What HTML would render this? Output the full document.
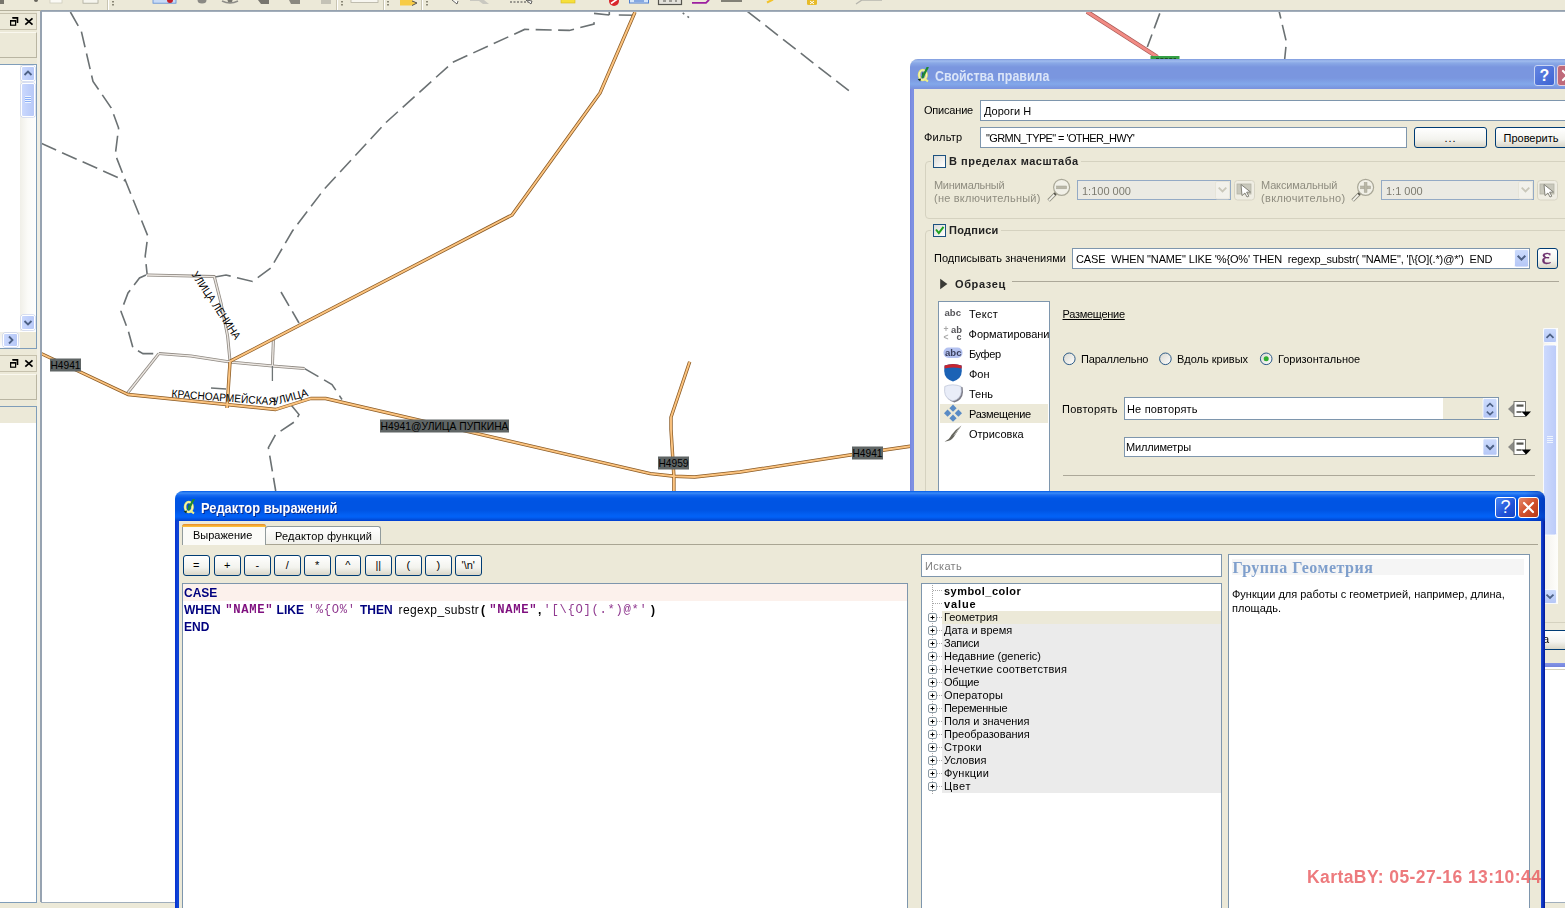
<!DOCTYPE html>
<html><head><meta charset="utf-8">
<style>
*{box-sizing:border-box;margin:0;padding:0}
html,body{width:1565px;height:908px;overflow:hidden;background:#fff}
body{font-family:"Liberation Sans",sans-serif;font-size:11px;color:#000;position:relative}
.a{position:absolute}
.t{will-change:opacity;opacity:.999;position:absolute;white-space:nowrap;line-height:13px}
.b{font-weight:bold}
.inp{position:absolute;background:#fff;border:1px solid #7e96ad}
.btn{opacity:.999;position:absolute;border:1px solid #003c74;border-radius:3px;background:linear-gradient(#fff,#f3f3ee 60%,#d9d6c8);text-align:center;line-height:18px}
/* MAIN WINDOW */
#tb{left:0;top:0;width:1565px;height:10px;background:#ece9d8}
#tbl{left:41px;top:10px;width:1524px;height:2px;background:linear-gradient(#8f9ba9,#aab5c1)}
#tbl2{left:0;top:10px;width:41px;height:1px;background:#b3af9b}
#lp{left:0;top:11px;width:37px;height:890px;background:#ece9d8}
#lpg{left:37px;top:11px;width:4px;height:896px;background:#f1efe4}
#lpb{left:40.4px;top:11px;width:1.4px;height:891px;background:#97a3b1}
#bot{left:0;top:902px;width:1565px;height:6px;background:#ece9d8}
.m{font-family:"Liberation Mono",monospace;font-size:12.2px;letter-spacing:.68px;line-height:15px;padding-left:.3px}
.s{color:#903a90}
.b.s{color:#7f107f}
.k{font-size:12px;color:#00007f}
.sb{border:1px solid #fff;border-radius:2px;background:linear-gradient(90deg,#cbd9fd,#c0d0fb 50%,#b8c9f7);box-shadow:0 0 0 .5px #b7c6ee}
</style></head><body>
<!-- toolbar -->
<div class="a" id="tb"></div><div class="a" id="tbl"></div><div class="a" id="tbl2"></div>
<!--TB-->
<svg class="a" style="left:0;top:0" width="1565" height="10" viewBox="0 0 1565 10">
<g stroke="#c9c5b2" stroke-width="1"><path d="M107.5,0V10M336.5,0V10M383.5,0V10M421.5,0V10"/></g>
<g stroke="#fff" stroke-width="1"><path d="M108.5,0V10M337.5,0V10M384.5,0V10M422.5,0V10"/></g>
<g fill="#8a8776"><rect x="112" y="1" width="2" height="1.5"/><rect x="112" y="4" width="2" height="1.5"/><rect x="341" y="1" width="2" height="1.5"/><rect x="341" y="4" width="2" height="1.5"/><rect x="387" y="1" width="2" height="1.5"/><rect x="387" y="4" width="2" height="1.5"/><rect x="426" y="1" width="2" height="1.5"/><rect x="426" y="4" width="2" height="1.5"/></g>
<path d="M0,0h4v4h-4z" fill="#77756c"/><circle cx="36" cy="0" r="2" fill="#66645c"/>
<rect x="50" y="-1" width="12" height="4" fill="#fbfaf5" stroke="#cfccbd" stroke-width=".8"/>
<rect x="83" y="-1" width="15" height="4.2" fill="#f6f5ee" stroke="#aaa89a" stroke-width=".8"/>
<rect x="153" y="-1" width="23" height="4.2" fill="#c9dbf6" stroke="#5d8bd8" stroke-width=".8"/><circle cx="170" cy="0" r="3" fill="#c41f2a"/>
<ellipse cx="202" cy="0" rx="4.5" ry="3.5" fill="#8a8984"/>
<path d="M222,1 Q230,5 238,1" fill="none" stroke="#8e8d88" stroke-width="1.6"/><circle cx="230" cy="0" r="2.5" fill="#77766f"/>
<path d="M258,0h11v4h-8z" fill="#77756e"/><path d="M289,0h11v4h-9z" fill="#8a8880"/><path d="M321,0h10v4h-10z" fill="#c4c2b6"/>
<rect x="351" y="-1" width="27" height="3.5" fill="#f7f6f0" stroke="#b4b1a2" stroke-width=".8"/>
<path d="M400,0h12l5,3l-5,2.5h-12z" fill="#f7cb46"/><path d="M412,1l5,2l-5,2.5" stroke="#555" fill="none" stroke-width="1"/>
<path d="M452,0l5,4l1,-3" fill="#fff" stroke="#555" stroke-width=".9"/>
<path d="M470,0h14l5,4h-6l-4,-3h-9z" fill="#c9c8c0"/>
<path d="M510,2h20" stroke="#444" stroke-width="1" stroke-dasharray="2 1.5"/><path d="M526,0l5,4l1,-3z" fill="#fff" stroke="#444" stroke-width=".8"/>
<rect x="561" y="-1" width="14" height="4" fill="#f6df3a" stroke="#d8b820" stroke-width=".6"/>
<circle cx="614" cy="1" r="5" fill="#d9262c"/><path d="M611,3.5L617.5,-1" stroke="#fff" stroke-width="1.6"/>
<rect x="629.5" y="-1" width="19" height="4" fill="#d6e6fa" stroke="#4f7fd0" stroke-width="1"/><path d="M634,1h10" stroke="#4f7fd0" stroke-width="1.2"/>
<rect x="658.5" y="-1" width="23" height="5.5" fill="#e4e3dc" stroke="#55554e" stroke-width="1.2"/><path d="M663,1h14" stroke="#55554e" stroke-width="1.2" stroke-dasharray="3 3"/>
<path d="M692,2.8h14l3,-3" fill="none" stroke="#9c1fa0" stroke-width="1.8"/>
<path d="M721,1h21" stroke="#55554e" stroke-width="1.4"/>
<path d="M767,2.5l6,-3" stroke="#f3c32a" stroke-width="2"/>
<rect x="807" y="-1" width="10" height="6" rx="1.5" fill="#e7bb28"/><path d="M810,1l4,3M814,1l-4,3" stroke="#fff" stroke-width="1"/>
<path d="M856,4l6,-4h20" fill="none" stroke="#b7b6ae" stroke-width="1.4"/>
</svg>
<!--/TB-->
<!-- left panel -->
<div class="a" id="lp"></div><div class="a" id="lpg"></div><div class="a" id="lpb"></div>
<div class="a" id="bot"></div><div class="a" id="botl" style="left:41px;top:902px;width:1530px;height:1px;background:#a0aebc"></div>
<!--LEFT-->
<div id="lpanel">
 <!-- dock title 1 -->
 <div class="a" style="left:-2px;top:13px;width:39px;height:17px;border:1px solid #c6c1ad"></div>
 <svg class="a" style="left:9px;top:16px" width="26" height="11" viewBox="9 16 26 11"><path d="M12.5,17.7 h5 v5.3" fill="none" stroke="#000" stroke-width="1.6"/><rect x="12.5" y="17" width="5" height="1.6" fill="#000"/><rect x="10.6" y="20.6" width="5" height="4.6" fill="#ece9d8" stroke="#000" stroke-width="1.2"/><rect x="10" y="20" width="6.2" height="1.6" fill="#000"/><path d="M25.3,18.3 L32.5,24.6 M32.5,18.3 L25.3,24.6" stroke="#000" stroke-width="1.7"/></svg>
 <div class="a" style="left:-2px;top:32px;width:39px;height:26px;border:1px solid #b9b5a2;border-top-color:#faf8ef"></div>
 <!-- list 1 -->
 <div class="a" style="left:-2px;top:64px;width:39px;height:285px;border:1px solid #7f9db9;background:#fff"></div>
 <div class="a" style="left:20px;top:65px;width:16px;height:266px;background:linear-gradient(90deg,#f0efe8,#fbfbf8 50%,#fefefd)"></div>
 <div class="a" style="left:-1px;top:332px;width:37px;height:16px;background:#ece9d8"></div>
 <div class="a" style="left:-1px;top:332px;width:21px;height:16px;background:linear-gradient(#f0efe8,#fefefd)"></div>
 <!-- up btn -->
 <div class="a sb" style="left:21px;top:66px;width:14px;height:15px"></div>
 <svg class="a" style="left:21px;top:66px" width="14" height="15"><path d="M3.5,9 L7,5.5 L10.5,9" fill="none" stroke="#4d6185" stroke-width="1.8"/></svg>
 <!-- thumb -->
 <div class="a sb" style="left:21px;top:83px;width:14px;height:34px"></div>
 <div class="a" style="left:25px;top:96px;width:6px;height:7px;background:repeating-linear-gradient(#eef4fe 0,#eef4fe 1px,#8cb0f8 1px,#8cb0f8 2px)"></div>
 <!-- down btn -->
 <div class="a sb" style="left:21px;top:315px;width:14px;height:15px"></div>
 <svg class="a" style="left:21px;top:315px" width="14" height="15"><path d="M3.5,6 L7,9.5 L10.5,6" fill="none" stroke="#4d6185" stroke-width="1.8"/></svg>
 <!-- right btn -->
 <div class="a sb" style="left:3px;top:333px;width:15px;height:14px"></div>
 <svg class="a" style="left:3px;top:333px" width="15" height="14"><path d="M6,3.5 L9.5,7 L6,10.5" fill="none" stroke="#4d6185" stroke-width="1.8"/></svg>
 <!-- dock title 2 -->
 <div class="a" style="left:-2px;top:355px;width:39px;height:17px;border:1px solid #c6c1ad"></div>
 <svg class="a" style="left:9px;top:358px" width="26" height="11" viewBox="9 16 26 11"><path d="M12.5,17.7 h5 v5.3" fill="none" stroke="#000" stroke-width="1.6"/><rect x="12.5" y="17" width="5" height="1.6" fill="#000"/><rect x="10.6" y="20.6" width="5" height="4.6" fill="#ece9d8" stroke="#000" stroke-width="1.2"/><rect x="10" y="20" width="6.2" height="1.6" fill="#000"/><path d="M25.3,18.3 L32.5,24.6 M32.5,18.3 L25.3,24.6" stroke="#000" stroke-width="1.7"/></svg>
 <div class="a" style="left:-2px;top:374px;width:39px;height:26px;border:1px solid #b9b5a2;border-top-color:#faf8ef"></div>
 <!-- list 2 -->
 <div class="a" style="left:-2px;top:406px;width:39px;height:497px;border:1px solid #7f9db9;background:#fff"></div>
 <div class="a" style="left:-1px;top:407px;width:37px;height:16px;background:#ece9d8"></div>
</div>
<!--/LEFT-->
<!--MAP-->
<svg class="a" style="left:42px;top:12px" width="1523" height="890" viewBox="42 12 1523 890">
<defs>
<path id="pLen" d="M191.2,274.6 L234.8,340"/>
<path id="pKr" d="M171.3,397.2 L275.7,405.4"/>
<path id="pUl" d="M273.5,405.4 L309.3,395.8"/>
</defs>
<g fill="none" stroke="#6b7173" stroke-width="1.6" stroke-dasharray="16 6.5">
<path d="M70.4,12 L81.4,31.6 L93,81.4 L111.3,108 L118.6,128 L115.3,154.5 L125.6,181 L147.8,236 L145.2,256 L147.2,275"/>
<path d="M41.5,143.5 L125.6,181"/>
<path d="M146,275 L139.5,278 L128,293 L121,311.5 L128,330 L133,348 L143,353.6 L159,353.6"/>
<path d="M215,277 L226,275 L252.5,281.5 L270.8,268 L292.4,231 L324,189.4 L385.4,123 L452.7,62.3 L524.6,29.4 L569.3,30.4 L594,24 L594.2,20"/>
<path d="M594,13.4 L609.3,15 M609.3,12 V15 M618.8,15 L634.8,15.3" stroke-dasharray="none"/>
<path d="M682.7,12.8 L689,17.6" stroke-dasharray="2 4"/>
<path d="M281,292 L299,323"/>
<path d="M304.6,368.6 L332,384.5 L342,399.5"/>
<path d="M290.7,404.5 L299,414.5 L295.7,421 L275.7,434.4 L268.4,447.7 L275.7,491"/>
<path d="M747.6,11.6 L853.9,94.7"/>
<path d="M1159.8,13.4 L1147.3,47"/>
<path d="M1279.2,11.7 L1286.4,42 L1284.6,60" stroke-dashoffset="9"/>
</g>
<!-- grey streets -->
<g fill="none" stroke-linejoin="round">
<g stroke="#8f8982" stroke-width="3">
<path d="M147,275 L214.3,276.6 L221,303 L227.6,336 L230,361"/>
<path d="M158.8,353.6 L191,356 L230,362 L272.4,366 L304.6,368.6"/>
<path d="M158.8,353.6 L127.2,393.5"/>
<path d="M273.4,339.7 L272.4,366"/>
</g>
<g stroke="#ebe6e1" stroke-width="1.4">
<path d="M147,275 L214.3,276.6 L221,303 L227.6,336 L230,361"/>
<path d="M158.8,353.6 L191,356 L230,362 L272.4,366 L304.6,368.6"/>
<path d="M158.8,353.6 L127.2,393.5"/>
<path d="M273.4,339.7 L272.4,366"/>
</g>
<path d="M272.4,366 L272.4,381" stroke="#6e7475" stroke-width="1.3"/>
<path d="M211,388 L226,389" stroke="#6e7475" stroke-width="1.3"/>
</g>
<!-- orange roads -->
<g fill="none" stroke-linejoin="round">
<g stroke="#8a5a24" stroke-width="3.4">
<path d="M41.5,353.7 L128,394.5 L275.7,409.5 L310.6,398.5 L325.6,398.5 L650.3,473.6 L674.4,476.3 L694.6,477 L740,472 L851.6,454.8 L912,446"/>
<path d="M230,361.3 L512,215 L600,93 L635,12"/>
<path d="M230,362 L227,408"/>
<path d="M689.7,361.7 L671,417.2 L671,429.3 L673.9,476.3 L673.9,491"/>
</g>
<g stroke="#fcc480" stroke-width="1.9">
<path d="M41.5,353.7 L128,394.5 L275.7,409.5 L310.6,398.5 L325.6,398.5 L650.3,473.6 L674.4,476.3 L694.6,477 L740,472 L851.6,454.8 L912,446"/>
<path d="M230,361.3 L512,215 L600,93 L635,12"/>
<path d="M230,362 L227,408"/>
<path d="M689.7,361.7 L671,417.2 L671,429.3 L673.9,476.3 L673.9,491"/>
</g>
</g>
<!-- red road -->
<path d="M1087,11.7 L1157.4,57" stroke="#a85a56" stroke-width="4.4" fill="none"/>
<path d="M1087,11.7 L1157.4,57" stroke="#f28b84" stroke-width="2.8" fill="none"/>
<rect x="1150.5" y="56" width="29" height="4.4" fill="#35a046"/><path d="M1156,58.6H1176" stroke="#1d4f25" stroke-width="1.4" stroke-dasharray="3 1.4"/>
<!-- labels -->
<g font-family="Liberation Sans, sans-serif" font-size="11" fill="#000" opacity=".999">
<rect x="50" y="358.5" width="31" height="13" fill="#5f6565"/><text x="50.5" y="369.3" textLength="30" lengthAdjust="spacingAndGlyphs">H4941</text>
<rect x="380" y="419.5" width="129" height="13" fill="#5f6565"/><text x="380.5" y="430.3" textLength="128" lengthAdjust="spacingAndGlyphs">H4941@УЛИЦА ПУПКИНА</text>
<rect x="658" y="456.5" width="31" height="13" fill="#5f6565"/><text x="658.5" y="467.3" textLength="30" lengthAdjust="spacingAndGlyphs">H4959</text>
<rect x="852" y="446.5" width="31" height="13" fill="#5f6565"/><text x="852.5" y="457.3" textLength="30" lengthAdjust="spacingAndGlyphs">H4941</text>
<text><textPath href="#pLen" textLength="79" lengthAdjust="spacingAndGlyphs">УЛИЦА ЛЕНИНА</textPath></text>
<text><textPath href="#pKr" textLength="104.5" lengthAdjust="spacingAndGlyphs">КРАСНОАРМЕЙСКАЯ</textPath></text>
<text><textPath href="#pUl" textLength="36.5" lengthAdjust="spacingAndGlyphs">УЛИЦА</textPath></text>
</g>
</svg>
<!--/MAP-->
<!--RULEDLG-->
<div id="rd">
 <!-- frame -->
 <div class="a" style="left:910px;top:59px;width:660px;height:608px;background:#ece9d8;border-radius:8px 0 0 0"></div>
 <div class="a" style="left:910px;top:59px;width:660px;height:30px;border-radius:8px 0 0 0;background:linear-gradient(#7e9ade 0,#a0bcee 2px,#8aa9e6 4px,#7a96df 8px,#7a96df 19px,#83a8ea 25px,#7d9fe5 27px,#7b94de 29px)"></div>
 <div class="a" style="left:910px;top:89px;width:4px;height:578px;background:linear-gradient(90deg,#7384dd,#8091e3 50%,#7b8fe2)"></div>
 <div class="a" style="left:910px;top:663px;width:660px;height:4px;background:linear-gradient(#8595e5,#7384dd)"></div>
 <div class="t b" style="left:935px;top:68px;font-size:14px;line-height:16px;color:#dbe5f8;transform:scaleX(.885);transform-origin:0 0">Свойства правила</div>
 <svg class="a" style="left:917.3px;top:66.6px" width="13" height="16" viewBox="0 0 13 16"><ellipse cx="5.8" cy="8" rx="3.7" ry="5" fill="none" stroke="#e6e670" stroke-width="2.7"/><ellipse cx="5.8" cy="8" rx="3.7" ry="5" fill="none" stroke="#fbfbc8" stroke-width=".9"/><path d="M5.8,5.4v5.4" stroke="#1f6650" stroke-width="1.8"/><path d="M10.6,.6 L5.6,10" stroke="#1f8a30" stroke-width="2.2" stroke-linecap="round"/><path d="M6.8,11.4 L11,14.4" stroke="#eef08a" stroke-width="2"/><path d="M.6,12.2 l2.6,2.2 l.9,-2.8z" fill="#12381e"/></svg>
 <div class="a" style="left:1534px;top:65px;width:21px;height:21px;border-radius:3px;border:1px solid #c9d6f4;background:linear-gradient(135deg,#6485e2,#3c63d3);color:#fff;font-weight:bold;font-size:16px;line-height:19px;text-align:center">?</div>
 <div class="a" style="left:1557px;top:65px;width:21px;height:21px;border-radius:3px;border:1px solid #ecd0d6;background:#bf6a7a"></div>
 <svg class="a" style="left:1557px;top:65px" width="21" height="21"><path d="M6,6 L15,15 M15,6 L6,15" stroke="#fff" stroke-width="2.2" stroke-linecap="round"/></svg>

 <!-- Описание / Фильтр -->
 <div class="t" style="left:924px;top:104px;letter-spacing:-0.2px">Описание</div>
 <div class="inp" style="left:980px;top:100px;width:600px;height:21px"></div>
 <div class="t" style="left:984px;top:105px">Дороги Н</div>
 <div class="t" style="left:924px;top:131px;letter-spacing:0.24px">Фильтр</div>
 <div class="inp" style="left:980px;top:127px;width:427px;height:21px"></div>
 <div class="t" style="left:986px;top:132px;letter-spacing:-0.6px">"GRMN_TYPE" = 'OTHER_HWY'</div>
 <div class="btn" style="left:1414px;top:127px;width:73px;height:21px;line-height:20px;letter-spacing:1px">...</div>
 <div class="btn" style="left:1495px;top:127px;width:80px;height:21px;text-align:left;padding-left:7.5px;line-height:20px">Проверить</div>

 <!-- groupbox scale -->
 <div class="a" style="left:925px;top:161px;width:660px;height:58px;border:1px solid #d5d2c0;border-radius:4px"></div>
 <div class="a" style="left:931px;top:154px;width:150px;height:14px;background:#ece9d8"></div>
 <div class="a" style="left:933px;top:155px;width:13px;height:13px;border:1px solid #1c5180;background:linear-gradient(135deg,#dcdcd7,#fff)"></div>
 <div class="t b" style="left:949px;top:155px;color:#222;letter-spacing:0.53px">В пределах масштаба</div>
 <div class="t" style="left:934px;top:179px;color:#8f8d80;letter-spacing:-0.29px">Минимальный</div>
 <div class="t" style="left:934px;top:192px;color:#8f8d80;letter-spacing:0.22px">(не включительный)</div>
 <div class="t" style="left:1261px;top:179px;color:#8f8d80;letter-spacing:-0.14px">Максимальный</div>
 <div class="t" style="left:1261px;top:192px;color:#8f8d80;letter-spacing:0.37px">(включительно)</div>
 <div class="a" style="left:1077px;top:180px;width:154px;height:20px;border:1px solid #94aac5;background:#ebeae3"></div>
 <div class="t" style="left:1082px;top:185px;color:#7d7b70">1:100 000</div>
 <div class="a" style="left:1381px;top:180px;width:153px;height:20px;border:1px solid #94aac5;background:#ebeae3"></div>
 <div class="t" style="left:1386px;top:185px;color:#7d7b70">1:1 000</div>

 <!-- groupbox labels -->
 <div class="a" style="left:925px;top:230px;width:660px;height:440px;border:1px solid #d5d2c0;border-radius:4px"></div>
 <div class="a" style="left:931px;top:223px;width:70px;height:14px;background:#ece9d8"></div>
 <div class="a" style="left:933px;top:224px;width:13px;height:13px;border:1px solid #1c5180;background:linear-gradient(135deg,#dcdcd7,#fff)"></div>
 <div class="t b" style="left:949px;top:224px;color:#222;letter-spacing:0.27px">Подписи</div>
 <div class="t" style="left:934px;top:252px">Подписывать значениями</div>
 <div class="inp" style="left:1072px;top:248px;width:458px;height:21px"></div>
 <div class="t" style="left:1076px;top:253px;letter-spacing:-.15px">CASE&nbsp; WHEN "NAME" LIKE '%{O%' THEN&nbsp; regexp_substr( "NAME", '[\{O](.*)@*')&nbsp; END</div>
 <div class="btn" style="left:1537px;top:248px;width:21px;height:21px"></div>
 <div class="a" style="left:934px;top:281px;width:625px;height:1px;background:#aca899"></div>
 <div class="a" style="left:934px;top:275px;width:78px;height:18px;background:#ece9d8"></div>
 <div class="t b" style="left:955px;top:278px;color:#222;letter-spacing:0.63px">Образец</div>

 <!-- list -->
 <div class="inp" style="left:938px;top:301px;width:112px;height:200px"></div>
 <div class="a" style="left:940px;top:404px;width:108px;height:19px;background:#ece9d8"></div>
 <div class="t" style="left:969px;top:308px;letter-spacing:0.25px">Текст</div>
 <div class="t" style="left:968.6px;top:328px;letter-spacing:-.05px">Форматировани</div>
 <div class="t" style="left:969px;top:348px;letter-spacing:-0.4px">Буфер</div>
 <div class="t" style="left:969px;top:368px">Фон</div>
 <div class="t" style="left:969px;top:388px">Тень</div>
 <div class="t" style="left:969px;top:408px;letter-spacing:-.33px">Размещение</div>
 <div class="t" style="left:969px;top:428px">Отрисовка</div>

 <div class="t" style="left:1062.5px;top:308px;text-decoration:underline;letter-spacing:-.28px">Размещение</div>
 <div class="t" style="left:1081px;top:353px;letter-spacing:-0.18px">Параллельно</div>
 <div class="t" style="left:1177px;top:353px">Вдоль кривых</div>
 <div class="t" style="left:1278px;top:353px">Горизонтальное</div>
 <div class="t" style="left:1062px;top:403px;letter-spacing:0.26px">Повторять</div>
 <div class="inp" style="left:1124px;top:397px;width:375px;height:23px"></div>
 <div class="a" style="left:1443px;top:398px;width:40px;height:21px;background:#ece9d8"></div>
 <div class="t" style="left:1127px;top:403px;letter-spacing:0.18px">Не повторять</div>
 <div class="inp" style="left:1124px;top:437px;width:375px;height:20px"></div>
 <div class="t" style="left:1126px;top:441px;letter-spacing:-0.18px">Миллиметры</div>
 <div class="a" style="left:1063px;top:475px;width:472px;height:1px;background:#aca899"></div>
 <!-- scrollbar -->
 <div class="a" style="left:1543px;top:328px;width:15px;height:276px;background:linear-gradient(90deg,#f3f1ec,#fefefb)"></div>

 <!-- ICONS -->
 <svg class="a" style="left:911px;top:60px" width="654" height="610" viewBox="911 60 654 610">
 <defs>
  <linearGradient id="rg" x1="0" y1="0" x2="1" y2="1"><stop offset="0" stop-color="#d8d7cf"/><stop offset="1" stop-color="#fff"/></linearGradient>
  <linearGradient id="bb" x1="0" y1="0" x2="0" y2="1"><stop offset="0" stop-color="#cddcfd"/><stop offset="1" stop-color="#b4c6f6"/></linearGradient><linearGradient id="bh" x1="0" y1="0" x2="1" y2="0"><stop offset="0" stop-color="#cddafd"/><stop offset="1" stop-color="#bccbf9"/></linearGradient>
  <g id="dd"><path d="M0,8 L6,2.2 V13.8Z" fill="#8a8a86"/><rect x="6" y=".5" width="11.5" height="15" fill="#fff" stroke="#77776f" stroke-width="1"/><rect x="8.5" y="3.5" width="7" height="2.2" fill="#55554f"/><rect x="8.5" y="10.2" width="5" height="1.6" fill="#55554f"/><path d="M13.5,10.5 H23 L18.2,15.6Z" fill="#000"/></g>
  <g id="mc"><rect x=".5" y=".5" width="20" height="19.5" rx="3" fill="#efede3" stroke="#d7d4c4"/><rect x="3" y="4" width="14" height="10" fill="#c9c8bc" stroke="#b4b3a6" stroke-width=".8"/><path d="M7,4.5 L16.5,12 L12.6,12.2 L14.8,16.2 L13,17 L10.9,13 L8,15.6Z" fill="#fff" stroke="#77766c" stroke-width=".9"/></g>
 </defs>
 <!-- checkbox mark -->
 <path d="M936,229.5 L938.8,233 L943.5,226.8" fill="none" stroke="#21a121" stroke-width="2"/>
 <!-- triangle -->
 <path d="M940.2,278.7 L947.4,284 L940.2,289.3Z" fill="#3a3a36"/>
 <!-- zoom out -->
 <g><path d="M1055.6,193.4 L1048.6,200.6" stroke="#8f8d80" stroke-width="3.6"/><path d="M1054.6,194.4 L1048.9,200.3" stroke="#f4f3ea" stroke-width="1.8"/><path d="M1056.8,192.2 L1054.4,194.6" stroke="#55534a" stroke-width="2.6"/><circle cx="1061.6" cy="187.3" r="8" fill="#f1f0e7" stroke="#a9a797" stroke-width="1.2"/><rect x="1056.6" y="186" width="10" height="2.8" fill="#bab8a8" stroke="#a3a192" stroke-width=".5"/></g>
 <!-- zoom in -->
 <g><path d="M1359.6,193.4 L1352.6,200.6" stroke="#8f8d80" stroke-width="3.6"/><path d="M1358.6,194.4 L1352.9,200.3" stroke="#f4f3ea" stroke-width="1.8"/><path d="M1360.8,192.2 L1358.4,194.6" stroke="#55534a" stroke-width="2.6"/><circle cx="1365.6" cy="187.3" r="8" fill="#f1f0e7" stroke="#a9a797" stroke-width="1.2"/><rect x="1360.6" y="186" width="10" height="2.8" fill="#bab8a8" stroke="#a3a192" stroke-width=".5"/><rect x="1364.2" y="182.4" width="2.8" height="10" fill="#bab8a8" stroke="#a3a192" stroke-width=".5"/></g>
 <!-- disabled combo arrows -->
 <rect x="1215.5" y="181.5" width="14" height="17.5" rx="1.5" fill="#f2f1eb" stroke="#e3e1d6" stroke-width=".8"/><path d="M1218.7,187.6 L1222.5,191.4 L1226.3,187.6" fill="none" stroke="#c9c7ba" stroke-width="1.8"/>
 <rect x="1518.5" y="181.5" width="14" height="17.5" rx="1.5" fill="#f2f1eb" stroke="#e3e1d6" stroke-width=".8"/><path d="M1521.7,187.6 L1525.5,191.4 L1529.3,187.6" fill="none" stroke="#c9c7ba" stroke-width="1.8"/>
 <use href="#mc" x="1234" y="180"/><use href="#mc" x="1537" y="180"/>
 <!-- combo arrow CASE -->
 <rect x="1514.5" y="249.5" width="14" height="17.5" rx="1.5" fill="url(#bb)" stroke="#fff" stroke-width=".8"/><path d="M1517.7,255.8 L1521.5,259.6 L1525.3,255.8" fill="none" stroke="#4d6185" stroke-width="2"/>
 <!-- radios -->
 <circle cx="1069.3" cy="358.8" r="5.8" fill="url(#rg)" stroke="#2c5a86" stroke-width="1"/>
 <circle cx="1165.4" cy="358.8" r="5.8" fill="url(#rg)" stroke="#2c5a86" stroke-width="1"/>
 <circle cx="1266.2" cy="358.8" r="5.8" fill="url(#rg)" stroke="#2c5a86" stroke-width="1"/><circle cx="1266.2" cy="358.8" r="2.5" fill="#2fae2f"/>
 <!-- spin -->
 <rect x="1483" y="398.5" width="14" height="19.5" rx="1.5" fill="url(#bb)" stroke="#fff" stroke-width=".8"/><path d="M1486.8,406.6 L1490,403.6 L1493.2,406.6 M1486.8,411.6 L1490,414.6 L1493.2,411.6" fill="none" stroke="#4d6185" stroke-width="1.6"/>
 <!-- combo mm -->
 <rect x="1483" y="438.8" width="14" height="16.4" rx="1.5" fill="url(#bb)" stroke="#fff" stroke-width=".8"/><path d="M1486.2,445.3 L1490,449.1 L1493.8,445.3" fill="none" stroke="#4d6185" stroke-width="2"/>
 <use href="#dd" x="1508" y="401"/><use href="#dd" x="1508" y="439"/>
 <!-- list icons -->
 <g font-family="Liberation Sans, sans-serif" font-weight="bold" font-size="9.5" fill="#55555a">
  <text x="944.5" y="316" textLength="16.5" lengthAdjust="spacingAndGlyphs">abc</text>
  <text x="943.5" y="332" font-size="8.5" fill="#a8a8a8">+</text><text x="951" y="332.5" font-size="9" textLength="11" lengthAdjust="spacingAndGlyphs">ab</text>
  <text x="943.5" y="340" font-size="8.5" fill="#a8a8a8">&lt;</text><text x="956.5" y="340" font-size="9">c</text>
  <rect x="943.5" y="347.5" width="19" height="10.5" rx="5" fill="#b4c2f0"/><text x="945" y="356" textLength="16.5" lengthAdjust="spacingAndGlyphs" fill="#3a3f5c">abc</text>
 </g>
 <path d="M944.6,365.5 Q953,362.5 961.6,365.5 L961.8,371 Q961.6,379 953,381.4 Q944.4,379 944.2,371Z" fill="#1b62b5"/><path d="M944.6,365.5 Q953,362.5 961.6,365.5 L961.7,368.6 Q953,366.6 944.5,368.6Z" fill="#c7252f"/>
 <path d="M946.2,387.2 Q954,384 962.6,387.2 L963,392 Q962.6,400 954.4,402.6 Q946.6,400.4 946,393Z" fill="#7b7b86"/>
 <path d="M944.8,386.4 Q952.6,383.2 961,386.4 L961.3,391.4 Q961,398.8 952.9,401 Q945,398.8 944.6,391.4Z" fill="#e9edf8" stroke="#b9c0d4" stroke-width=".7"/>
 <g fill="#5a8bc5"><path d="M953,404.6 l3.6,3.6 l-3.6,3.6 l-3.6,-3.6z"/><path d="M953,414.6 l3.6,3.6 l-3.6,3.6 l-3.6,-3.6z"/><path d="M947.6,409.6 l3.6,3.6 l-3.6,3.6 l-3.6,-3.6z"/><path d="M958.4,409.6 l3.6,3.6 l-3.6,3.6 l-3.6,-3.6z"/></g>
 <path d="M961.4,425.4 Q957.4,431 954,436.8 Q950.4,441.8 944.6,441.4 Q949.4,439.6 951.4,435 Q955.4,429.4 961.4,425.4Z" fill="#66665f"/><path d="M960.6,426.4 Q957,431 954,435.6" stroke="#b9b9b4" stroke-width="1" fill="none"/>
 <!-- scrollbar -->
 <rect x="1543.5" y="328.5" width="13" height="14" rx="1.5" fill="url(#bb)" stroke="#fff" stroke-width=".8"/><path d="M1546.5,337.8 L1550,334.4 L1553.5,337.8" fill="none" stroke="#4d6185" stroke-width="1.8"/>
 <rect x="1543.5" y="345" width="13" height="190" rx="1.5" fill="url(#bh)" stroke="#fff" stroke-width=".8"/>
 <path d="M1547,436.5h6M1547,438.5h6M1547,440.5h6M1547,442.5h6" stroke="#eef4fe" stroke-width="1"/>
 <rect x="1543.5" y="589.5" width="13" height="14" rx="1.5" fill="url(#bb)" stroke="#fff" stroke-width=".8"/><path d="M1546.5,594.6 L1550,598 L1553.5,594.6" fill="none" stroke="#4d6185" stroke-width="1.8"/>
 <!-- epsilon -->
 <text x="1541.6" y="264.2" font-family="Liberation Serif, serif" font-size="23" fill="#6b2d6b" stroke="#6b2d6b" stroke-width=".35">ε</text>
 </svg>
 <div class="a" style="left:1470px;top:622px;width:100px;height:1px;background:#d5d2c0"></div>
 <!-- bottom button -->
 <div class="btn" style="left:1470px;top:630px;width:110px;height:20px;border-radius:0 0 0 0"></div>
 <div class="t" style="left:1543px;top:633px">а</div>
</div>
<!--/RULEDLG-->
<!--EXPRDLG-->
<div id="ed">
 <!-- frame -->
 <div class="a" style="left:175px;top:491px;width:1370px;height:420px;background:#ece9d8;border-radius:8px 8px 0 0"></div>
 <div class="a" style="left:175px;top:491px;width:1370px;height:30px;border-radius:8px 8px 0 0;background:linear-gradient(#0058e6 0,#3a8cf8 2px,#1a6cf0 4px,#0058e8 7px,#0054e3 10px,#0054e3 19px,#0260f4 24px,#0261f7 26px,#0253e0 28px,#003dd0 30px)"></div>
 <div class="a" style="left:1525px;top:491px;width:20px;height:30px;border-radius:0 8px 0 0;background:linear-gradient(90deg,rgba(0,30,150,0),rgba(0,30,150,.45))"></div>
 <div class="a" style="left:175px;top:521px;width:4px;height:390px;background:linear-gradient(90deg,#0a2fcf,#0a3cd4 40%,#1148d8 70%,#0c3fce)"></div>
 <div class="a" style="left:1541px;top:521px;width:4px;height:390px;background:linear-gradient(90deg,#1848d6,#0b30bd 50%,#051c96)"></div>
 <div class="t b" style="left:201px;top:500px;font-size:14px;line-height:16px;color:#fff;transform:scaleX(.92);transform-origin:0 0;text-shadow:1px 1px 0 #0a2b8c">Редактор выражений</div>
 <svg class="a" style="left:182.6px;top:499.4px" width="13" height="16" viewBox="0 0 13 16"><ellipse cx="5.8" cy="8" rx="3.7" ry="5" fill="none" stroke="#e6e670" stroke-width="2.7"/><ellipse cx="5.8" cy="8" rx="3.7" ry="5" fill="none" stroke="#fbfbc8" stroke-width=".9"/><path d="M5.8,5.4v5.4" stroke="#1f6650" stroke-width="1.8"/><path d="M10.6,.6 L5.6,10" stroke="#1f8a30" stroke-width="2.2" stroke-linecap="round"/><path d="M6.8,11.4 L11,14.4" stroke="#eef08a" stroke-width="2"/><path d="M.6,12.2 l2.6,2.2 l.9,-2.8z" fill="#12381e"/></svg>
 <div class="a" style="left:1495px;top:497px;width:21px;height:21px;border-radius:3px;border:1px solid #fff;background:linear-gradient(135deg,#4a86f5,#1f52d8 60%,#1844c4);color:#fff;font-size:18px;line-height:19px;text-align:center">?</div>
 <div class="a" style="left:1518px;top:497px;width:21px;height:21px;border-radius:3px;border:1px solid #fff;background:linear-gradient(135deg,#e58a6c,#d2512c 50%,#b83a18)"></div>
 <svg class="a" style="left:1518px;top:497px" width="21" height="21"><path d="M6,6 L15,15 M15,6 L6,15" stroke="#fff" stroke-width="2.2" stroke-linecap="round"/></svg>

 <!-- tabs -->
 <div class="a" style="left:182px;top:544px;width:1356px;height:1px;background:#a9a593"></div>
 <div class="a" style="left:265px;top:526px;width:116px;height:18px;border:1px solid #919b9c;border-bottom:none;border-radius:3px 3px 0 0;background:linear-gradient(#fff,#f0f0ea)"></div>
 <div class="a" style="left:182px;top:524px;width:84px;height:21px;border:1px solid #919b9c;border-bottom:none;border-radius:3px 3px 0 0;background:#fbfbf8"></div>
 <div class="a" style="left:182px;top:524px;width:84px;height:3px;border-radius:3px 3px 0 0;background:linear-gradient(#e68b2c,#ffc73c)"></div>
 <div class="t" style="left:193px;top:529px">Выражение</div>
 <div class="t" style="left:275px;top:530px;letter-spacing:0.17px">Редактор функций</div>

 <!-- op buttons -->
 <div class="btn" style="left:183px;top:555px;width:26.5px;height:21px">=</div>
 <div class="btn" style="left:214px;top:555px;width:26.5px;height:21px">+</div>
 <div class="btn" style="left:244px;top:555px;width:26.5px;height:21px">-</div>
 <div class="btn" style="left:274px;top:555px;width:26.5px;height:21px">/</div>
 <div class="btn" style="left:304px;top:555px;width:26.5px;height:21px">*</div>
 <div class="btn" style="left:334.5px;top:555px;width:26.5px;height:21px">^</div>
 <div class="btn" style="left:365px;top:555px;width:26.5px;height:21px">||</div>
 <div class="btn" style="left:395px;top:555px;width:26.5px;height:21px">(</div>
 <div class="btn" style="left:425px;top:555px;width:26.5px;height:21px">)</div>
 <div class="btn" style="left:455px;top:555px;width:26.5px;height:21px">'\n'</div>

 <!-- editor -->
 <div class="inp" style="left:182px;top:583px;width:726px;height:330px"></div>
 <div class="a" style="left:183px;top:584px;width:724px;height:17px;background:#fcf1ec"></div>
 <div class="t b k" style="left:184px;top:587px">CASE</div>
 <div class="t b k" style="left:184px;top:604px">WHEN</div>
 <div class="t b m s" style="left:225px;top:603px">"NAME"</div>
 <div class="t b k" style="left:276.6px;top:604px">LIKE</div>
 <div class="t m s" style="left:307.5px;top:603px">'%{O%'</div>
 <div class="t b k" style="left:360px;top:604px">THEN</div>
 <div class="t" style="left:398.6px;top:604px;font-size:12px;letter-spacing:.35px">regexp_substr</div>
 <div class="t b" style="left:481px;top:604px;font-size:12px">(</div>
 <div class="t b m s" style="left:489px;top:603px">"NAME"</div>
 <div class="t b" style="left:538px;top:604px;font-size:12px">,</div>
 <div class="t m s" style="left:543.2px;top:603px">'[\{O](.*)@*'</div>
 <div class="t b" style="left:651px;top:604px;font-size:12px">)</div>
 <div class="t b k" style="left:184px;top:621px">END</div>

 <!-- search + tree -->
 <div class="inp" style="left:921px;top:554px;width:301px;height:23px"></div>
 <div class="t" style="left:925px;top:560px;color:#808080;letter-spacing:0.32px">Искать</div>
 <div class="inp" style="left:921px;top:583px;width:301px;height:330px"></div>
 <div class="a" style="left:942px;top:610.5px;width:279px;height:182.5px;background:#ebebeb"></div>
 <div class="a" style="left:942px;top:610.5px;width:279px;height:13px;background:#ece9d8"></div>
 <div class="t b" style="left:944px;top:585px;letter-spacing:0.47px">symbol_color</div>
 <div class="t b" style="left:944px;top:598px;letter-spacing:0.88px">value</div>
 <div class="t" style="left:944px;top:611px">Геометрия</div>
 <div class="t" style="left:944px;top:624px">Дата и время</div>
 <div class="t" style="left:944px;top:637px;letter-spacing:-0.22px">Записи</div>
 <div class="t" style="left:944px;top:650px">Недавние (generic)</div>
 <div class="t" style="left:944px;top:663px;letter-spacing:0.25px">Нечеткие соответствия</div>
 <div class="t" style="left:944px;top:676px;letter-spacing:-0.2px">Общие</div>
 <div class="t" style="left:944px;top:689px;letter-spacing:0.14px">Операторы</div>
 <div class="t" style="left:944px;top:702px;letter-spacing:-0.29px">Переменные</div>
 <div class="t" style="left:944px;top:715px">Поля и значения</div>
 <div class="t" style="left:944px;top:728px">Преобразования</div>
 <div class="t" style="left:944px;top:741px;letter-spacing:0.28px">Строки</div>
 <div class="t" style="left:944px;top:754px">Условия</div>
 <div class="t" style="left:944px;top:767px;letter-spacing:0.25px">Функции</div>
 <div class="t" style="left:944px;top:780px;letter-spacing:0.6px">Цвет</div>


 <svg class="a" style="left:922px;top:584px" width="22" height="215" viewBox="922 584 22 215">
 <defs><g id="pl"><rect x=".5" y=".5" width="8" height="8" rx="1.5" fill="#fdfdfb" stroke="#8d9ba5" stroke-width="1"/><path d="M2.5,4.5h4M4.5,2.5v4" stroke="#000" stroke-width="1"/></g></defs>
 <path d="M932.5,585 V795" stroke="#a8a8a8" stroke-width="1" stroke-dasharray="1 1"/>
 <path d="M933,590.5 H942 M933,603.5 H942" stroke="#a8a8a8" stroke-width="1" stroke-dasharray="1 1"/>
 <path d="M937,617.5 H942" stroke="#a8a8a8" stroke-width="1" stroke-dasharray="1 1"/><path d="M937,630.5 H942" stroke="#a8a8a8" stroke-width="1" stroke-dasharray="1 1"/><path d="M937,643.5 H942" stroke="#a8a8a8" stroke-width="1" stroke-dasharray="1 1"/><path d="M937,656.5 H942" stroke="#a8a8a8" stroke-width="1" stroke-dasharray="1 1"/><path d="M937,669.5 H942" stroke="#a8a8a8" stroke-width="1" stroke-dasharray="1 1"/><path d="M937,682.5 H942" stroke="#a8a8a8" stroke-width="1" stroke-dasharray="1 1"/><path d="M937,695.5 H942" stroke="#a8a8a8" stroke-width="1" stroke-dasharray="1 1"/><path d="M937,708.5 H942" stroke="#a8a8a8" stroke-width="1" stroke-dasharray="1 1"/><path d="M937,721.5 H942" stroke="#a8a8a8" stroke-width="1" stroke-dasharray="1 1"/><path d="M937,734.5 H942" stroke="#a8a8a8" stroke-width="1" stroke-dasharray="1 1"/><path d="M937,747.5 H942" stroke="#a8a8a8" stroke-width="1" stroke-dasharray="1 1"/><path d="M937,760.5 H942" stroke="#a8a8a8" stroke-width="1" stroke-dasharray="1 1"/><path d="M937,773.5 H942" stroke="#a8a8a8" stroke-width="1" stroke-dasharray="1 1"/><path d="M937,786.5 H942" stroke="#a8a8a8" stroke-width="1" stroke-dasharray="1 1"/>
 <use href="#pl" x="928" y="613"/><use href="#pl" x="928" y="626"/><use href="#pl" x="928" y="639"/><use href="#pl" x="928" y="652"/><use href="#pl" x="928" y="665"/><use href="#pl" x="928" y="678"/><use href="#pl" x="928" y="691"/><use href="#pl" x="928" y="704"/><use href="#pl" x="928" y="717"/><use href="#pl" x="928" y="730"/><use href="#pl" x="928" y="743"/><use href="#pl" x="928" y="756"/><use href="#pl" x="928" y="769"/><use href="#pl" x="928" y="782"/>
 </svg>
 <!-- help -->
 <div class="inp" style="left:1228px;top:554px;width:301.5px;height:360px"></div>
 <div class="a" style="left:1232px;top:559px;width:292px;height:16px;background:#f5f5f5"></div>
 <div class="t b" style="left:1232.5px;top:560px;font-family:'Liberation Serif',serif;font-size:16px;line-height:16px;color:#7f9fcc;letter-spacing:.5px">Группа Геометрия</div>
 <div class="t" style="left:1232px;top:588px">Функции для работы с геометрией, например, длина,</div>
 <div class="t" style="left:1232px;top:602px">площадь.</div>
</div>
<!--/EXPRDLG-->
<!--WATERMARK-->
<div class="t b" style="left:1307px;top:867px;font-size:17.5px;line-height:20px;color:rgba(232,84,88,.78);letter-spacing:.42px">KartaBY: 05-27-16 13:10:44</div>
<!--/WATERMARK-->
</body></html>
